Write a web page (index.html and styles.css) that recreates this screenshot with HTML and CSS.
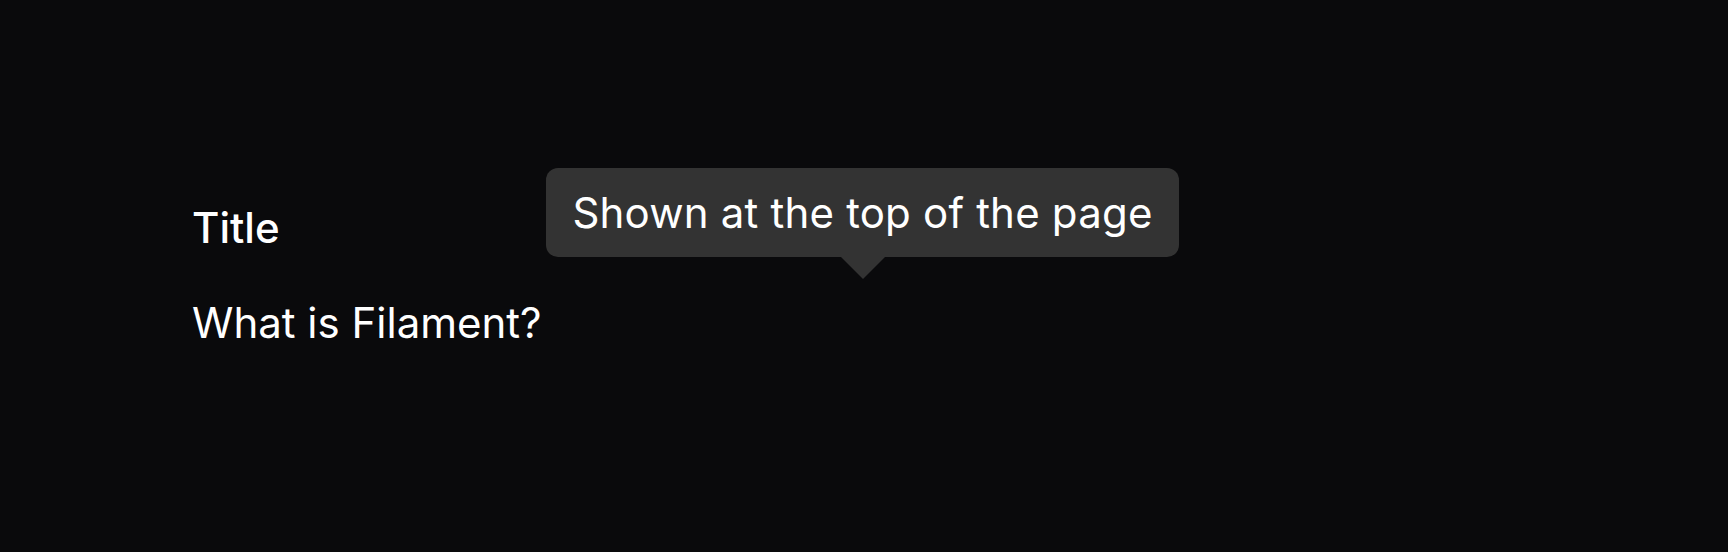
FILE: index.html
```html
<!DOCTYPE html>
<html lang="en">
<head>
    <meta charset="UTF-8">
    <meta name="viewport" content="width=device-width, initial-scale=1.0">
    <title>Text entry</title>
    <link rel="stylesheet" href="styles.css">
</head>
<body>
    <div class="entry">
        <div class="entry-label">Title</div>
        <div class="entry-value">What is Filament?</div>
    </div>
    <div class="tooltip" role="tooltip">
        <div class="tooltip-content">Shown at the top of the page</div>
        <div class="tooltip-arrow"></div>
    </div>
</body>
</html>
```

FILE: styles.css
```css
body {
    margin: 0;
    background-color: #0a0a0c;
    color: #fff;
    font-family: Inter, "Noto Sans", sans-serif;
    min-height: 552px;
    position: relative;
}
.entry {
    padding: 198px 0 0 192px;
}
.entry-label {
    font-size: 42px;
    font-weight: 500;
    line-height: 60px;
}
.entry-value {
    margin-top: 35px;
    font-size: 42px;
    line-height: 60px;
}
.tooltip {
    position: absolute;
    left: 546px;
    top: 168px;
    width: 633px;
}
.tooltip-content {
    background: #333;
    border-radius: 12px;
    padding: 15px 0;
    text-align: center;
    font-size: 42px;
    line-height: 59px;
    letter-spacing: 0.2px;
}
.tooltip-arrow {
    width: 0;
    height: 0;
    margin: 0 auto;
    border-left: 22px solid transparent;
    border-right: 22px solid transparent;
    border-top: 22px solid #333;
}
```
